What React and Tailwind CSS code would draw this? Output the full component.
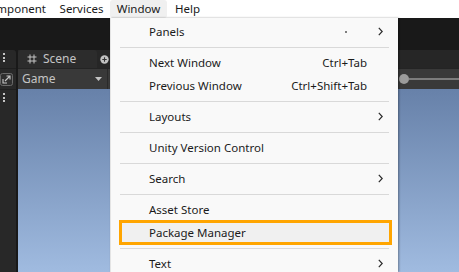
import React from 'react';

const font = { fontFamily: '"Noto Sans", "Open Sans", Arial, sans-serif' };

const menu = [
  { label: 'Panels', dot: true, sub: true },
  { sep: true },
  { label: 'Next Window', shortcut: 'Ctrl+Tab' },
  { label: 'Previous Window', shortcut: 'Ctrl+Shift+Tab' },
  { sep: true },
  { label: 'Layouts', sub: true },
  { sep: true },
  { label: 'Unity Version Control' },
  { sep: true },
  { label: 'Search', sub: true },
  { sep: true },
  { label: 'Asset Store' },
  { label: 'Package Manager', marked: true },
  { sep: true },
  { label: 'Text', sub: true },
];

function Chevron() {
  return (
    <svg width="5" height="9" viewBox="0 0 5 9" className="shrink-0">
      <path d="M0.8 0.8 L4.2 4.5 L0.8 8.2" fill="none" stroke="#2a2a2a" strokeWidth="1.2" />
    </svg>
  );
}

function VDots() {
  return (
    <div className="flex flex-col gap-[1.5px] pl-[3px]">
      <span className="h-[2px] w-[2px] bg-[#c4c4c4]" />
      <span className="h-[2px] w-[2px] bg-[#c4c4c4]" />
      <span className="h-[2px] w-[2px] bg-[#c4c4c4]" />
    </div>
  );
}

function MenuRow({ item }) {
  if (item.sep) {
    return (
      <div className="flex h-[8px] items-center px-[9px]">
        <div className="h-px flex-1 bg-[#d9d9d9]" />
      </div>
    );
  }
  return (
    <div className="relative flex h-[23px] items-center pl-[38px] pr-[15px]">
      {item.marked && (
        <span className="absolute left-[8px] right-[6px] top-[-1px] bottom-[-1px] border-[3px] border-[#ffa500] bg-[#f0f0f0]" />
      )}
      <span className="relative flex-1">{item.label}</span>
      {item.dot && <span className="mr-[31px] h-[2px] w-[2px] rounded-full bg-[#555]" />}
      {item.shortcut && <span className="relative mr-[11px]">{item.shortcut}</span>}
      {item.sub ? <Chevron /> : <span className="w-[5px]" />}
    </div>
  );
}

export default function App() {
  return (
    <div className="relative h-[272px] w-[459px] overflow-hidden bg-[#191919] text-[11.5px]" style={font}>
      {/* menu bar */}
      <div className="flex h-[18px] items-center bg-white text-[#1a1a1a] whitespace-nowrap">
        <span className="flex w-[53px] justify-end pr-[7px]">Component</span>
        <span className="flex w-[57px] justify-center">Services</span>
        <span className="flex h-[18px] w-[57px] items-center justify-center rounded-[3px] bg-[#f0f0f0]">Window</span>
        <span className="flex w-[41px] justify-center">Help</span>
      </div>

      {/* editor body */}
      <div className="flex h-[254px]">
        <div className="mt-[32px] flex w-[16px] flex-col rounded-tr-[3px] bg-[#282828]">
          <div className="h-[18px] pt-[3px]">
            <VDots />
          </div>
          <div className="flex h-[21px] items-center border-t border-[#1f1f1f]">
            <svg width="13" height="13" viewBox="0 0 13 13">
              <rect x="0.5" y="0.5" width="12" height="12" rx="2" fill="#2f2f2f" stroke="#6a6a6a" />
              <path d="M3 6 V10 H7" fill="none" stroke="#c8c8c8" strokeWidth="1.1" />
              <path d="M5 8 L10 3 M6.5 3 H10 V6.5" fill="none" stroke="#c8c8c8" strokeWidth="1.1" />
            </svg>
          </div>
          <div className="border-t border-[#1f1f1f] pt-[3px]">
            <VDots />
          </div>
        </div>

        <div className="ml-[2px] mt-[32px] flex flex-1 flex-col">
          <div className="flex h-[18px] bg-[#262626]">
            <div className="flex w-[79px] items-center gap-[6px] rounded-t-[3px] bg-[#2c2c2c] pl-[9px] text-[12px] text-[#c4c4c4]">
              <svg width="10" height="10" viewBox="0 0 10 10">
                <path d="M3 0.5 V9.5 M7 0.5 V9.5 M0.5 3 H9.5 M0.5 7 H9.5" stroke="#c4c4c4" strokeWidth="1" />
              </svg>
              <span>Scene</span>
            </div>
            <div className="flex items-center pl-[3px]">
              <svg width="9" height="9" viewBox="0 0 9 9">
                <circle cx="4.5" cy="4.5" r="4.2" fill="#c2c2c2" />
                <path d="M4.5 2.3 V6.7 M2.3 4.5 H6.7" stroke="#333" strokeWidth="1.1" />
              </svg>
            </div>
          </div>
          <div className="flex h-[21px] border-t border-[#242424] bg-[#393939]">
            <div className="flex w-[90px] items-center justify-between border-r border-[#2a2a2a] pl-[4px] pr-[5px] text-[12px] text-[#c4c4c4]">
              <span>Game</span>
              <svg width="7" height="4" viewBox="0 0 7 4">
                <path d="M0 0 H7 L3.5 4 Z" fill="#c4c4c4" />
              </svg>
            </div>
            <div className="flex-1" />
            <div className="flex w-[60px] items-center">
              <span className="h-[10px] w-[10px] rounded-full bg-[#9b9b9b]" />
              <span className="h-[2px] flex-1 bg-[#7c7c7c]" />
            </div>
          </div>
          <div className="flex-1 bg-linear-to-b from-[#6781a9] to-[#a0bbe0]" />
        </div>
      </div>

      {/* Window dropdown */}
      <div className="absolute left-[110px] top-[18px] bottom-0 w-[288px] border-l border-[#e4e4e4] bg-[#f9f9f9] pt-[2px] text-[#1b1b1b] shadow-[1px_0_2px_rgba(0,0,0,0.35)]">
        {menu.map((item, i) => (
          <MenuRow key={i} item={item} />
        ))}
      </div>
    </div>
  );
}
